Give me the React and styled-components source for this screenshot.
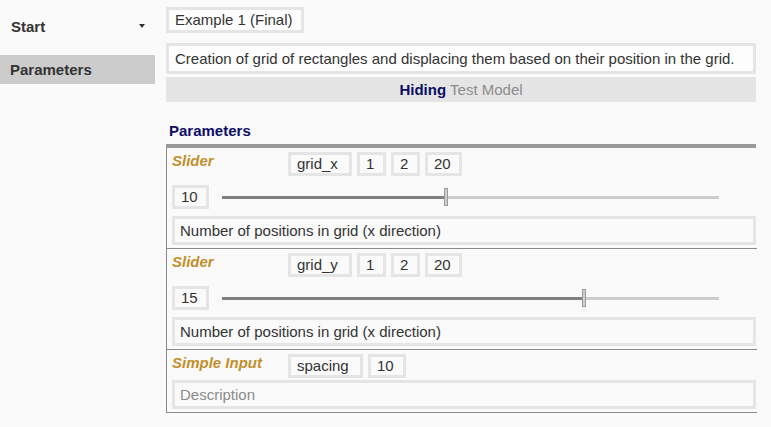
import React from "react";
import styled, { createGlobalStyle } from "styled-components";

const Global = createGlobalStyle`
  html, body { margin: 0; padding: 0; background: #fafafa; }
  body { font-family: "Liberation Sans", Arial, sans-serif; font-size: 15px; color: #333; }
`;

const Page = styled.div`
  display: flex;
  align-items: flex-start;
  width: 771px;
  min-height: 427px;
`;

const Sidebar = styled.nav`
  width: 155px;
  flex: none;
  padding-top: 10px;
  display: flex;
  flex-direction: column;
  gap: 13px;
`;

const NavItem = styled.div`
  display: flex;
  align-items: center;
  justify-content: space-between;
  height: ${(p) => p.$h}px;
  padding: 0 10px 0 ${(p) => (p.$active ? 10 : 11)}px;
  background: ${(p) => (p.$active ? "#cccccc" : "transparent")};
  font-weight: bold;
  color: #333;
`;

const Caret = styled.span`
  width: 0;
  height: 0;
  border-left: 3px solid transparent;
  border-right: 3px solid transparent;
  border-top: 4px solid #333;
`;

const Main = styled.main`
  width: 590px;
  margin-left: 11px;
  padding-top: 7px;
  display: flex;
  flex-direction: column;
  align-items: flex-start;
`;

const Box = styled.div`
  border: 3px solid #e5e5e5;
  background: #fdfdfd;
  line-height: 20px;
  padding: 0 6px;
  color: #333;
`;

const Title = styled(Box)`
  padding: 0 8px 0 6px;
`;

const Description = styled(Box)`
  align-self: stretch;
  margin-top: 10px;
  line-height: 25px;
`;

const HideBar = styled.div`
  align-self: stretch;
  margin-top: 3px;
  height: 25px;
  background: #e5e5e5;
  display: flex;
  justify-content: center;
  align-items: center;
  gap: 4px;
`;

const HideStrong = styled.span`
  font-weight: bold;
  color: #0d0d66;
`;

const HideMuted = styled.span`
  color: #8c8c8c;
`;

const SectionHead = styled.h2`
  margin: 21px 0 0;
  padding-left: 3px;
  font-size: 15px;
  line-height: 16px;
  font-weight: bold;
  color: #0d0d66;
`;

const Rule = styled.div`
  align-self: stretch;
  margin-top: 5px;
  height: 4px;
  background: #999;
`;

const Block = styled.section`
  align-self: stretch;
  margin-right: -1px;
  border-left: 1px solid #8a8a8a;
  border-bottom: 1px solid #8a8a8a;
  padding: 4px 0 3px 5px;
  display: flex;
  flex-direction: column;
`;

const Row = styled.div`
  display: flex;
  align-items: flex-start;
  margin-bottom: ${(p) => p.$mb}px;
`;

const Label = styled.div`
  width: 116px;
  flex: none;
  font-weight: bold;
  font-style: italic;
  color: #c18f2b;
  line-height: 16px;
  margin-top: 1px;
`;

const Fields = styled.div`
  display: flex;
  gap: 5px;
`;

const Field = styled.div`
  box-sizing: border-box;
  width: ${(p) => p.$w}px;
  height: 24px;
  border: 3px solid #e5e5e5;
  background: #fafafa;
  padding: 0 6px;
  line-height: 18px;
  color: #333;
  white-space: nowrap;
`;

const SliderRow = styled.div`
  display: flex;
  align-items: center;
  margin-bottom: 7px;
`;

const Track = styled.div`
  position: relative;
  margin-left: 13px;
  width: 497px;
  height: 3px;
  background: #cccccc;
`;

const Fill = styled.div`
  height: 100%;
  background: #808080;
`;

const Thumb = styled.div`
  position: absolute;
  top: -8px;
  width: 2px;
  height: 16px;
  border: 1px solid #9a9a9a;
  background: #cfcfcf;
`;

const DescBox = styled.div`
  box-sizing: border-box;
  width: 584px;
  height: 29px;
  border: 3px solid #e5e5e5;
  background: #fafafa;
  padding: 0 5px;
  line-height: 23px;
  color: ${(p) => (p.$placeholder ? "#8a8a8a" : "#333")};
`;

const Slider = ({ value, min, max }) => {
  const frac = (value - min) / (max - min);
  const left = Math.round(frac * 497) + 1;
  return (
    <Track>
      <Fill style={{ width: left + 2 }} />
      <Thumb style={{ left }} />
    </Track>
  );
};

const SliderBlock = ({ name, value }) => (
  <Block>
    <Row $mb={9}>
      <Label>Slider</Label>
      <Fields>
        <Field $w={64}>{name}</Field>
        <Field $w={29}>1</Field>
        <Field $w={29}>2</Field>
        <Field $w={37}>20</Field>
      </Fields>
    </Row>
    <SliderRow>
      <Field $w={37}>{value}</Field>
      <Slider value={value} min={2} max={20} />
    </SliderRow>
    <DescBox>Number of positions in grid (x direction)</DescBox>
  </Block>
);

export default function App() {
  return (
    <>
      <Global />
      <Page>
        <Sidebar>
          <NavItem $h={32}>
            <span>Start</span>
            <Caret />
          </NavItem>
          <NavItem $h={29} $active>
            <span>Parameters</span>
          </NavItem>
        </Sidebar>
        <Main>
          <Title>Example 1 (Final)</Title>
          <Description>
            Creation of grid of rectangles and displacing them based on their position in the grid.
          </Description>
          <HideBar>
            <HideStrong>Hiding</HideStrong>
            <HideMuted>Test Model</HideMuted>
          </HideBar>
          <SectionHead>Parameters</SectionHead>
          <Rule />
          <SliderBlock name="grid_x" value={10} />
          <SliderBlock name="grid_y" value={15} />
          <Block>
            <Row $mb={2}>
              <Label>Simple Input</Label>
              <Fields>
                <Field $w={75}>spacing</Field>
                <Field $w={38}>10</Field>
              </Fields>
            </Row>
            <DescBox $placeholder>Description</DescBox>
          </Block>
        </Main>
      </Page>
    </>
  );
}
